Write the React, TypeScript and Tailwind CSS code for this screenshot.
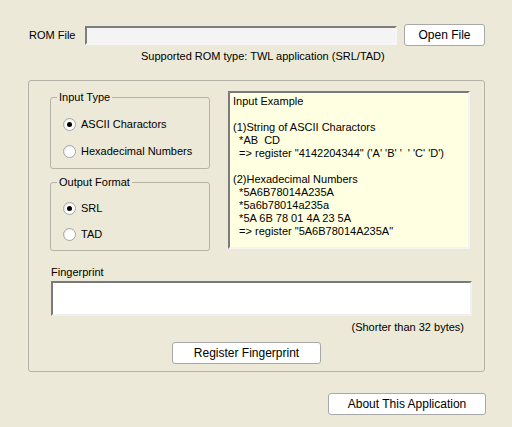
import React from "react";

const Radio = ({ label, checked }: { label: string; checked?: boolean }) => (
  <label className="flex items-center gap-[5px] h-[13px] whitespace-nowrap">
    <span className="w-[13px] h-[13px] shrink-0 rounded-full border border-[#a5a5a5] bg-white flex items-center justify-center shadow-[inset_1px_1px_1px_rgba(0,0,0,0.08)]">
      {checked && <span className="w-[5px] h-[5px] rounded-full bg-black" />}
    </span>
    <span>{label}</span>
  </label>
);

const Group = ({ title, children, className }: { title: string; children: React.ReactNode; className?: string }) => (
  <fieldset className={"border border-[#b5b3a8] rounded-[3px] pl-[12px] pr-[4px] " + (className ?? "")}>
    <legend className="ml-[-6px] px-[2px] leading-[13px]">{title}</legend>
    {children}
  </fieldset>
);

const Btn = ({ text, className }: { text: string; className?: string }) => (
  <button className={"bg-white border border-[#a8a8a8] rounded-[3px] text-black leading-none " + (className ?? "")}>
    {text}
  </button>
);

export default function App() {
  return (
    <div className="w-[512px] h-[427px] bg-[#ECE9D8] text-black text-[11px] font-['Liberation_Sans',Arial,sans-serif] overflow-hidden">
      <div className="flex items-center pt-[24px] pl-[29px]">
        <span className="w-[56px]">ROM File</span>
        <div className="w-[312px] h-[19px] bg-[#f4f4f4] border-2 border-t-[#7d7d7d] border-l-[#7d7d7d] border-b-[#f6f6f6] border-r-[#f6f6f6]" />
        <Btn text="Open File" className="ml-[7px] w-[81px] h-[22px] text-[12px]" />
      </div>
      <div className="pl-[141px] mt-[4px] leading-[13px]">Supported ROM type: TWL application (SRL/TAD)</div>

      <div className="ml-[28px] mt-[17px] w-[457px] h-[292px] border border-[#b5b3a8] rounded-[3px]">
        <div className="flex pt-[10px] pl-[21px] gap-[18px]">
          <div className="flex flex-col w-[160px]">
            <Group title="Input Type" className="h-[78px] pt-[14px]">
              <div className="flex flex-col gap-[14px]">
                <Radio label="ASCII Charactors" checked />
                <Radio label="Hexadecimal Numbers" />
              </div>
            </Group>
            <Group title="Output Format" className="h-[75px] mt-[7px] pt-[13px]">
              <div className="flex flex-col gap-[13px]">
                <Radio label="SRL" checked />
                <Radio label="TAD" />
              </div>
            </Group>
          </div>
          <div className="w-[242px] h-[158px] bg-[#FFFFE1] border-2 border-t-[#7a7a7a] border-l-[#7a7a7a] border-b-[#f4f4f4] border-r-[#f4f4f4] pl-[3px] pt-[2px] leading-[13px] whitespace-pre">
            {`Input Example

(1)String of ASCII Charactors
  *AB  CD
  => register "4142204344" ('A' 'B' '  ' 'C' 'D')

(2)Hexadecimal Numbers
  *5A6B78014A235A
  *5a6b78014a235a
  *5A 6B 78 01 4A 23 5A
  => register "5A6B78014A235A"`}
          </div>
        </div>
        <div className="pl-[22px] mt-[15px] leading-[13px]">Fingerprint</div>
        <div className="ml-[22px] mt-[2px] w-[421px] h-[35px] bg-white border-2 border-t-[#7a7a7a] border-l-[#7a7a7a] border-b-[#f0f0f0] border-r-[#f0f0f0]" />
        <div className="w-[435px] text-right mt-[5px] leading-[13px]">(Shorter than 32 bytes)</div>
        <div className="pl-[143px] mt-[8px]">
          <Btn text="Register Fingerprint" className="w-[149px] h-[22px] text-[12px]" />
        </div>
      </div>
      <div className="flex pl-[328px] mt-[21px]">
        <Btn text="About This Application" className="w-[158px] h-[22px] text-[12px]" />
      </div>
    </div>
  );
}
